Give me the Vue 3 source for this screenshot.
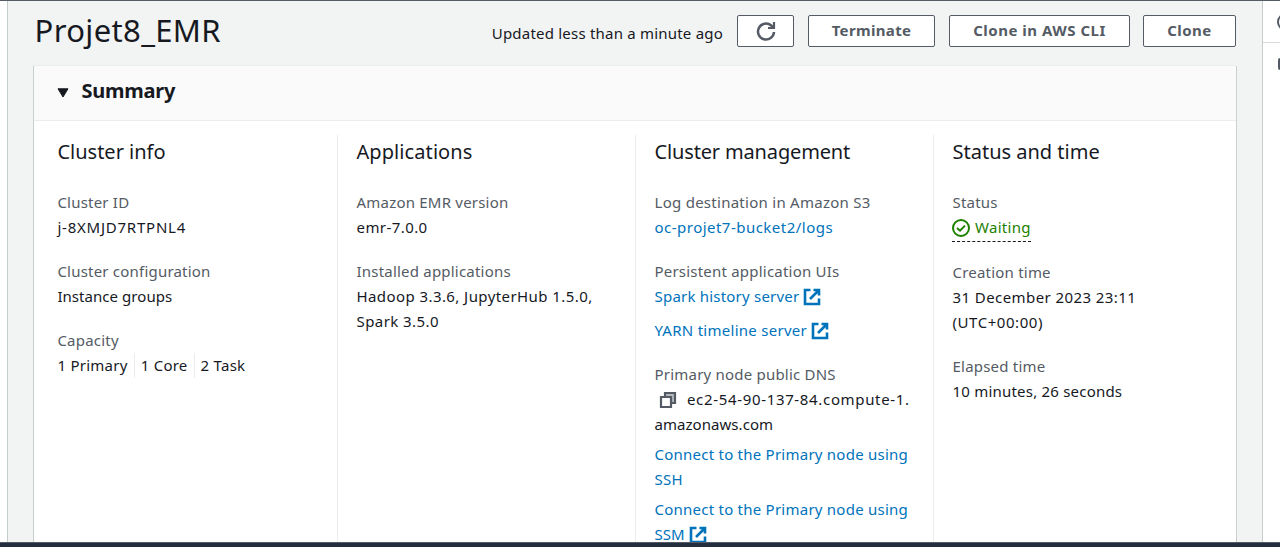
<script setup>
const info = [
  { label: 'Cluster ID', value: 'j-8XMJD7RTPNL4', cls: 'ls-8' },
  { label: 'Cluster configuration', value: 'Instance groups', cls: 'ls-0' },
]
const capacity = ['1 Primary', '1 Core', '2 Task']
const extPath = 'M7.500 2H2v14h14v-5.500M10.500 2H16v5.500M15.500 2.500 7 11'
</script>

<template>
  <div class="page">
    <div class="rail-left"></div>
    <main class="main">
      <header class="head">
        <h1>Projet8_EMR</h1>
        <div class="actions">
          <span class="updated">Updated less than a minute ago</span>
          <button class="btn refresh" aria-label="Refresh">
            <svg width="20" height="20" viewBox="0 0 20 20" fill="none" stroke="#545b64" stroke-width="2.500"><path d="M18 11a8 8 0 1 1-2.800-6.500L17 6" /><path d="M18 1v6h-6" stroke-width="2.200" /></svg>
          </button>
          <button class="btn terminate">Terminate</button>
          <button class="btn cli">Clone in AWS CLI</button>
          <button class="btn clone">Clone</button>
        </div>
      </header>

      <section class="card">
        <div class="card-head">
          <svg class="caret" width="12" height="10" viewBox="0 0 12 10"><path d="M1 .8h10L6 9z" fill="#16191f" stroke="#16191f" stroke-width="1" stroke-linejoin="round" /></svg>
          <h2>Summary</h2>
        </div>
        <div class="cols">
          <div class="col">
            <h3>Cluster info</h3>
            <dl v-for="i in info" :key="i.label">
              <dt>{{ i.label }}</dt>
              <dd :class="i.cls">{{ i.value }}</dd>
            </dl>
            <dl>
              <dt>Capacity</dt>
              <dd class="capacity"><span v-for="c in capacity" :key="c">{{ c }}</span></dd>
            </dl>
          </div>

          <div class="col">
            <h3 class="apps">Applications</h3>
            <dl>
              <dt>Amazon EMR version</dt>
              <dd class="ls-4">emr-7.0.0</dd>
            </dl>
            <dl>
              <dt>Installed applications</dt>
              <dd class="ls-4">Hadoop 3.3.6, JupyterHub 1.5.0,<br />Spark 3.5.0</dd>
            </dl>
          </div>

          <div class="col">
            <h3 class="mgmt">Cluster management</h3>
            <dl>
              <dt class="wide">Log destination in Amazon S3</dt>
              <dd class="bucket"><a>oc-projet7-bucket2/logs</a></dd>
            </dl>
            <dl>
              <dt>Persistent application UIs</dt>
              <dd class="link-row"><a>Spark history server</a><svg class="ext" width="18" height="18" viewBox="0 0 18 18"><path :d="extPath" /></svg></dd>
              <dd class="link-row second wide"><a>YARN timeline server</a><svg class="ext" width="18" height="18" viewBox="0 0 18 18"><path :d="extPath" /></svg></dd>
            </dl>
            <dl>
              <dt>Primary node public DNS</dt>
              <dd class="dns-row"><svg class="copy" width="18" height="18" viewBox="0 0 18 18"><path class="back" d="M6 5.500V2h10v10h-3.500" /><path d="M2 6h10v10H2z" /></svg><span class="dns">ec2-54-90-137-84.compute-1.</span></dd>
              <dd class="ls-0">amazonaws.com</dd>
              <dd class="connect"><a>Connect to the Primary node using<br />SSH</a></dd>
              <dd class="connect"><a>Connect to the Primary node using</a></dd>
              <dd class="link-row ls-0"><a>SSM</a><svg class="ext" width="18" height="18" viewBox="0 0 18 18"><path :d="extPath" /></svg></dd>
            </dl>
          </div>

          <div class="col">
            <h3>Status and time</h3>
            <dl class="status-item">
              <dt>Status</dt>
              <dd><span class="status"><svg width="18" height="18" viewBox="0 0 18 18" fill="none" stroke="#1d8102" stroke-width="2"><circle cx="9" cy="9" r="8" /><path d="m5 9 3 2.700L13 6.600" /></svg><span>Waiting</span></span></dd>
            </dl>
            <dl>
              <dt>Creation time</dt>
              <dd class="ls-4">31 December 2023 23:11<br /><span class="utc">(UTC+00:00)</span></dd>
            </dl>
            <dl>
              <dt>Elapsed time</dt>
              <dd>10 minutes, 26 seconds</dd>
            </dl>
          </div>
        </div>
      </section>
    </main>
    <aside class="rail-right">
      <div class="tool"><svg width="18" height="18" viewBox="0 0 18 18" fill="none" stroke="#545b64" stroke-width="2"><circle cx="9" cy="9" r="8" /><path d="M9 8v5M9 4.500v2" /></svg></div>
      <div class="tool second"><svg width="18" height="18" viewBox="0 0 18 18"><rect x="1" y="3" width="16" height="12" rx="2" fill="#545b64" /></svg></div>
    </aside>
    <footer class="bottom"></footer>
  </div>
</template>

<style>
html, body { margin: 0; overflow: hidden; }
</style>

<style scoped>
.page {
  width: 1280px;
  height: 547px;
  box-sizing: border-box;
  border-top: 1px solid #545b64;
  display: grid;
  grid-template-columns: 7px 1255px 18px;
  grid-template-rows: 541px 5px;
  overflow: hidden;
  font-family: "Noto Sans", "Open Sans", sans-serif;
  font-size: 15px;
  line-height: 25px;
  letter-spacing: 0.21px;
  color: #16191f;
  background: #fff;
}
.main {
  box-sizing: border-box;
  border-left: 1px solid #c5cccc;
  background: #f2f3f3;
  padding: 0 25px 0 26px;
  overflow: hidden;
}
.head { display: flex; justify-content: space-between; height: 64px; }
h1 { margin: 7px 0 0 0.600px; font-size: 31px; font-weight: 400; line-height: 44px; letter-spacing: 0.35px; }
.actions { display: flex; align-items: flex-start; padding: 14px 1px 0 0; }
.updated { line-height: 37px; margin-right: 14px; white-space: nowrap; }
.btn {
  box-sizing: border-box;
  height: 32px;
  padding: 0 0 2px;
  border: 1px solid #545b64;
  border-radius: 2px;
  background: #fff;
  color: #545b64;
  font: 700 15px/28px "Noto Sans", sans-serif;
  letter-spacing: 0.35px;
  display: flex;
  align-items: center;
  justify-content: center;
}
.refresh { width: 57px; margin-right: 14px; padding: 0; }
.terminate { width: 127px; margin-right: 14px; }
.cli { width: 181px; margin-right: 13px; letter-spacing: 0.5px; }
.clone { width: 93px; letter-spacing: 0.45px; }
.card {
  box-sizing: border-box;
  width: 1202px;
  height: 520px;
  background: #fff;
  border-top: 1px solid #eaeded;
  box-shadow: -1px 1px 0 #c9d0d0, 1px 1px 0 #c9d0d0;
}
.card-head { display: flex; align-items: center; box-sizing: border-box; height: 55px; padding: 0 0 4px 23px; background: #fafafa; border-bottom: 1px solid #eaeded; }
.caret { margin: 4px 12.500px 0 0; }
h2 { margin: 0; font-size: 20px; font-weight: 700; line-height: 30px; letter-spacing: -0.25px; }
.cols { display: grid; grid-template-columns: 304px 298px 298px 302px; padding-top: 14px; }
.col { box-sizing: border-box; height: 450px; padding-left: 18.500px; white-space: nowrap; }
.col:first-child { padding-left: 23.400px; }
.col:not(:last-child) { border-right: 1px solid #eaeded; }
h3 { margin: 0 0 21px; font-size: 20px; font-weight: 400; line-height: 34px; letter-spacing: 0; }
.apps { letter-spacing: 0.08px; }
.mgmt { letter-spacing: -0.15px; }
dl { margin: 0 0 19px; }
dt { color: #545b64; }
.wide { letter-spacing: 0.27px; }
dd { margin: 0; }
.ls-0 { letter-spacing: 0.05px; }
.ls-4 { letter-spacing: 0.42px; }
.ls-8 { letter-spacing: 0.77px; }
.bucket { letter-spacing: 0.48px; }
.utc { letter-spacing: 0.55px; }
.dns { letter-spacing: 0.66px; }
a { color: #0073bb; }
.capacity { display: flex; letter-spacing: 0.26px; }
.capacity span + span { margin-left: 6px; padding-left: 6px; border-left: 1px solid #eaeded; }
.link-row, .dns-row { display: flex; align-items: center; }
.link-row.second { margin-top: 9px; }
.ext { margin-left: 4px; fill: none; stroke: #0073bb; stroke-width: 2.6; }
.copy { margin: 0 10.500px 0 4px; fill: none; stroke: #545b64; stroke-width: 2.2; }
.back { fill: #b5b9be; }
.copy path:last-child { fill: #fff; }
.connect { margin-top: 5px; letter-spacing: 0.24px; }
.status-item { margin-bottom: 20px; }
.status-item dd { height: 25px; display: flex; }
.status { display: inline-flex; align-items: center; height: 26px; margin-left: -0.500px; gap: 5px; color: #1d8102; border-bottom: 1px dashed #16191f; letter-spacing: 0.3px; }
.status > span { margin-top: -2px; }
.rail-right { border-left: 1px solid #c5cccc; overflow: hidden; }
.tool { box-sizing: border-box; height: 42px; padding: 12px 0 0 14px; border-bottom: 1px solid #d5dbdb; }
.tool.second { border: 0; padding-top: 12px; }
.tool svg { display: block; }
.bottom { grid-column: 1 / -1; background: #232f3e; border-top: 1px solid #545b64; box-sizing: border-box; }
</style>
